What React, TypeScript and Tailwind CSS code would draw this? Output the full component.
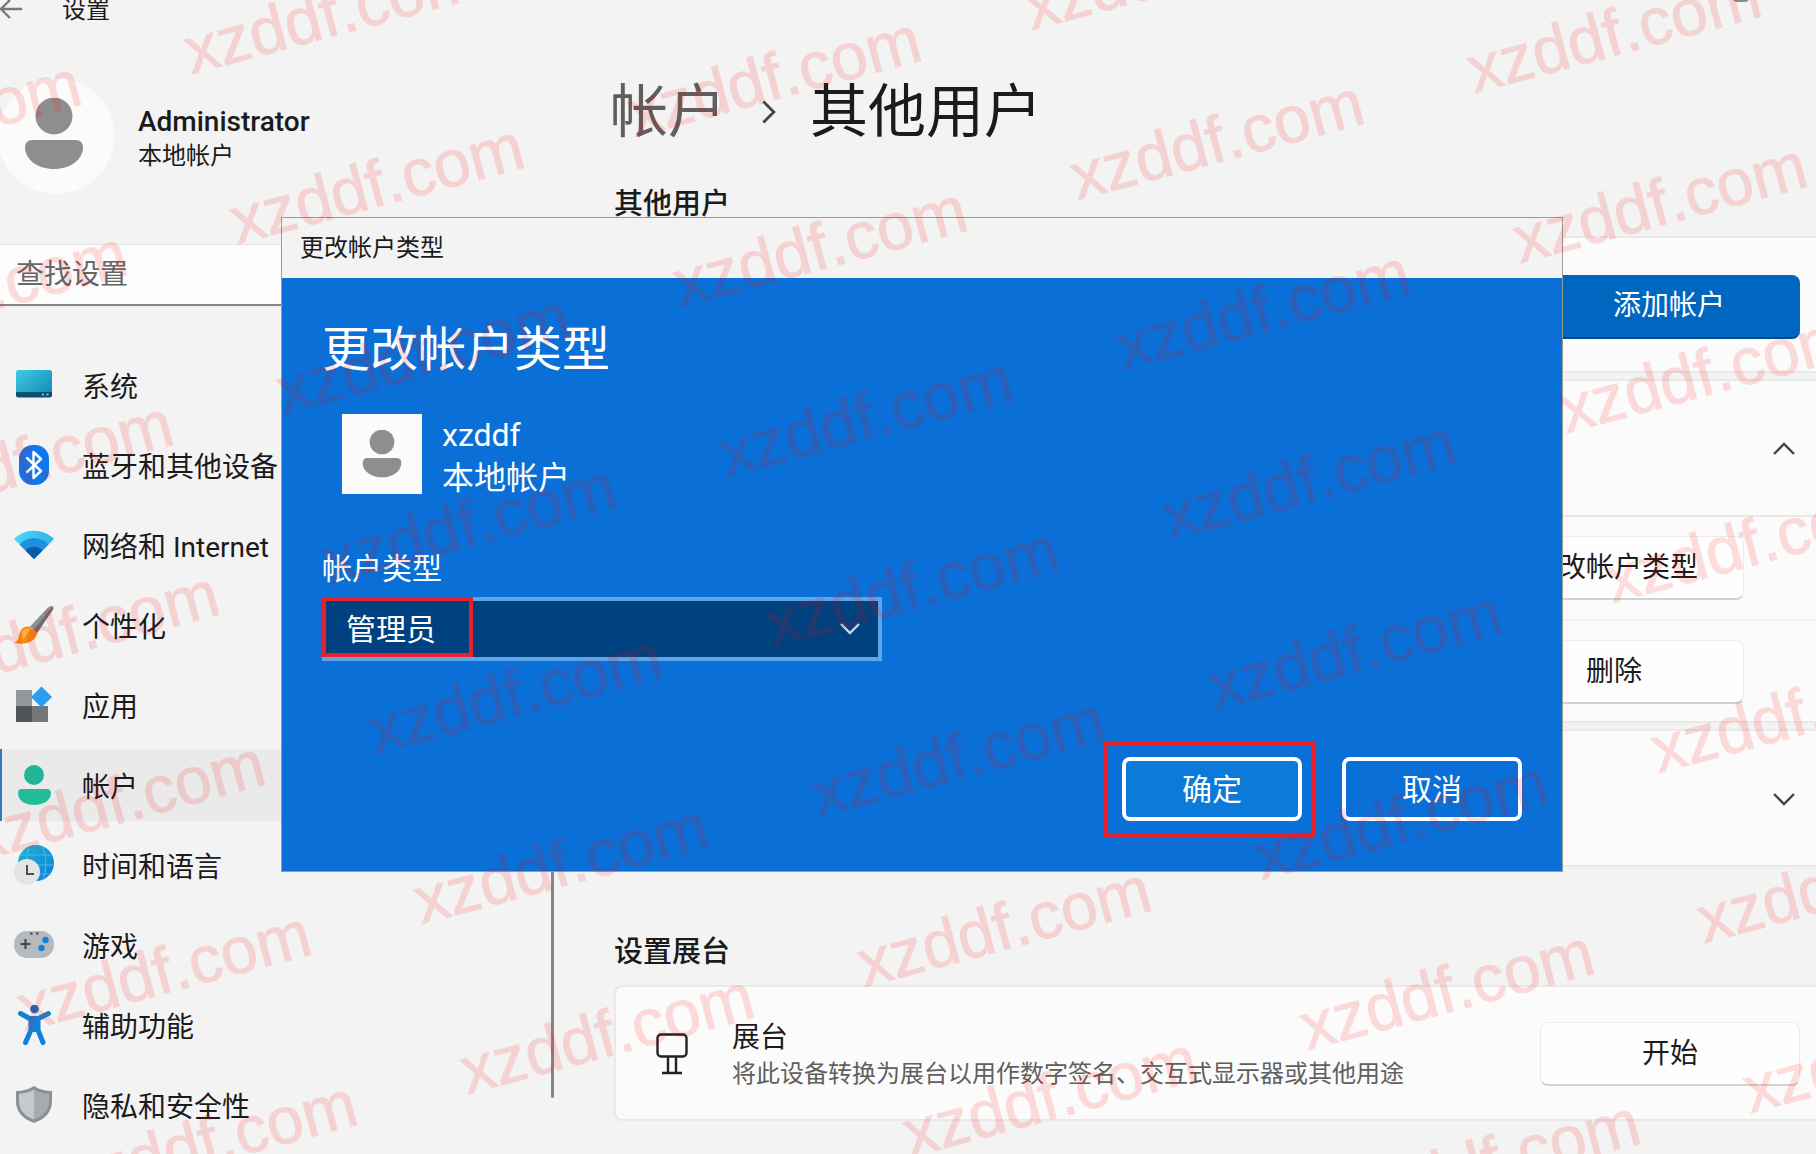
import type { ReactNode } from "react";

function PersonGlyph({ className }: { className: string }) {
  return (
    <svg viewBox="0 0 60 72" className={className} fill="#8e8e8e" aria-hidden="true">
      <circle cx="30" cy="18" r="18.5" />
      <path d="M8 42h44c4 0 7 3 7 7 0 13-13 22-29 22S1 62 1 49c0-4 3-7 7-7z" />
    </svg>
  );
}

function Chevron({ className, d = "M3 7l9 9 9-9" }: { className: string; d?: string }) {
  return (
    <svg viewBox="0 0 24 24" className={className} fill="none" stroke="currentColor" strokeWidth="2.4" aria-hidden="true">
      <path d={d} />
    </svg>
  );
}

function Icon({ children }: { children: ReactNode }) {
  return (
    <svg viewBox="0 0 40 40" className="size-10 shrink-0" aria-hidden="true">
      {children}
    </svg>
  );
}

const navItems = [
  {
    label: "系统",
    icon: (
      <Icon>
        <defs>
          <linearGradient id="sys" x1="0" y1="0" x2="1" y2="1">
            <stop offset="0" stopColor="#3ccfe0" />
            <stop offset="1" stopColor="#1583b4" />
          </linearGradient>
        </defs>
        <rect x="2" y="5" width="36" height="27" rx="2.5" fill="url(#sys)" />
        <path d="M2 27h36v3a2.5 2.5 0 0 1-2.5 2.5h-31A2.5 2.5 0 0 1 2 30z" fill="#0c4f75" />
        <path d="M28 29.5h2M32.5 29.5h2" stroke="#8fdcf2" strokeWidth="1.6" />
      </Icon>
    ),
  },
  {
    label: "蓝牙和其他设备",
    icon: (
      <Icon>
        <rect x="5" y="0" width="30" height="40" rx="14" fill="#0f78ee" />
        <path d="M13 13l14 13-7.5 7V7l7.5 7-14 13" fill="none" stroke="#fff" strokeWidth="2.4" strokeLinejoin="round" strokeLinecap="round" />
      </Icon>
    ),
  },
  {
    label: "网络和 Internet",
    icon: (
      <Icon>
        <defs>
          <linearGradient id="wifi" x1="0" y1="0" x2="1" y2="0">
            <stop offset="0" stopColor="#4bd6f5" />
            <stop offset="1" stopColor="#2fb4ee" />
          </linearGradient>
        </defs>
        <path d="M0 14C11 3 29 3 40 14L20 34z" fill="url(#wifi)" />
        <path d="M5.5 19.5C13 11 27 11 34.5 19.5L20 34z" fill="#1e90dc" />
        <path d="M11.5 25.5c4.5-5 12.5-5 17 0L20 34z" fill="#0c5ba8" />
      </Icon>
    ),
  },
  {
    label: "个性化",
    icon: (
      <Icon>
        <path d="M37 1c2 0 3 1 2 3.5L23 28l-7-6.5L34 2.5C35 1.5 36 1 37 1z" fill="#8d9094" />
        <path d="M38.5 1.5c1 .6 1 1.5.5 3L23 28l-3.5-3z" fill="#6c6f74" />
        <path d="M15.5 21.5l8 7C21 37 10 41 0 37.5c4-1 4.5-4 5.5-9 1.2-5 5.5-7.5 10-7z" fill="#f58a12" />
        <path d="M8 27c2-3.5 5-4 8-3l-7 11z" fill="#fbb040" />
      </Icon>
    ),
  },
  {
    label: "应用",
    icon: (
      <Icon>
        <path d="M2 5h16v16H2z" fill="#94979c" />
        <path d="M2 21h16v16H2z" fill="#505358" />
        <path d="M18 21h16v16H18z" fill="#74777c" />
        <path d="M27.5 1.5L38 12 27.5 22.5 17 12z" fill="#2b9df0" />
      </Icon>
    ),
  },
  {
    label: "帐户",
    icon: (
      <Icon>
        <circle cx="20" cy="10" r="10" fill="#22b597" />
        <path d="M7 24h26c2.5 0 4 1.5 4 4 0 7-7 12-17 12S4 35 4 28c0-2.5 1.5-4 3-4z" fill="#22bd98" />
      </Icon>
    ),
  },
  {
    label: "时间和语言",
    icon: (
      <Icon>
        <defs>
          <linearGradient id="globe" x1="0" y1="0" x2="1" y2="1">
            <stop offset="0" stopColor="#22b3d0" />
            <stop offset="1" stopColor="#0f7ed8" />
          </linearGradient>
        </defs>
        <circle cx="22" cy="18" r="18" fill="url(#globe)" />
        <path d="M7 10h30M4 20h35M8 29h29M15 2c-4 12-4 22 0 33M29 2c4 12 4 22 0 33" stroke="#3fb9e6" strokeWidth="1.2" fill="none" />
        <circle cx="13" cy="27" r="13" fill="#e3e4e6" />
        <path d="M13 20v9h7" fill="none" stroke="#4d4f52" strokeWidth="2" />
      </Icon>
    ),
  },
  {
    label: "游戏",
    icon: (
      <Icon>
        <rect x="0" y="6" width="40" height="27" rx="13" fill="#b6babf" />
        <path d="M6.5 19h10M11.5 14v10" stroke="#45484c" strokeWidth="2.2" />
        <path d="M16 8.5h2.5M22 8.5h2.5" stroke="#45484c" strokeWidth="2" />
        <circle cx="31.5" cy="15" r="3.2" fill="#1480d8" />
        <circle cx="27.5" cy="23" r="3.2" fill="#1480d8" />
      </Icon>
    ),
  },
  {
    label: "辅助功能",
    icon: (
      <Icon>
        <circle cx="20.5" cy="4" r="4.3" fill="#1569ba" />
        <path d="M6.5 8.5l9 5h9l10-5M17 14v11l-5.5 12.5M24 14v11l5 12.5" fill="none" stroke="#1480d8" strokeWidth="5" strokeLinecap="round" strokeLinejoin="round" />
        <path d="M15 13h11v14H15z" fill="#1480d8" />
      </Icon>
    ),
  },
  {
    label: "隐私和安全性",
    icon: (
      <Icon>
        <path d="M20 1c5 3.5 11 5 18 5v10c0 11-7 18-18 22C9 34 2 27 2 16V6c7 0 13-1.5 18-5z" fill="#8c9094" />
        <path d="M20 4.5c4.5 2.5 9.5 4 15 4.2V16c0 9-5.5 15-15 18.5z" fill="#a7abb0" />
        <path d="M20 4.5c-4.5 2.5-9.5 4-15 4.2V16c0 9 5.5 15 15 18.5z" fill="#c6cacd" />
      </Icon>
    ),
  },
];

function Sidebar() {
  return (
    <aside className="flex w-[554px] shrink-0 flex-col">
      <header className="flex h-5 items-center gap-10">
        <button type="button" aria-label="返回">
          <svg viewBox="0 0 22 24" className="h-6 w-[22px]" fill="none" stroke="#777" strokeWidth="2.4" aria-hidden="true">
            <path d="M22 11H1M10 2L1 11l9 9" />
          </svg>
        </button>
        <h1 className="text-2xl">设置</h1>
      </header>

      <div className="mt-[58px] -ml-0.5 flex items-center gap-6">
        <div className="flex size-[116px] items-center justify-center rounded-full bg-[#fbfbfb] pr-1 pb-1">
          <PersonGlyph className="h-[72px] w-[60px]" />
        </div>
        <div className="pt-1">
          <p className="text-[28px] leading-9 font-medium">Administrator</p>
          <p className="text-2xl leading-8">本地帐户</p>
        </div>
      </div>

      <input
        type="search"
        aria-label="查找设置"
        placeholder="查找设置"
        className="mt-[50px] mr-8 h-[62px] rounded-r-md border-t border-b-2 border-t-[#e6e6e6] border-b-[#868686] bg-[#fcfcfc] px-4 text-[28px] placeholder:text-[#666]"
      />

      <div className="mt-[43px] flex items-start">
        <nav className="flex flex-1 flex-col gap-2 pr-8">
          {navItems.map((item) => {
            const active = item.label === "帐户";
            return (
              <a
                key={item.label}
                href="#"
                aria-current={active ? "page" : undefined}
                className={
                  active
                    ? "flex h-[72px] items-center gap-7 rounded-r-lg border-l-2 border-[#3a78b8] bg-[#eaeaea] pl-3 text-[28px]"
                    : "flex h-[72px] items-center gap-7 pl-3.5 text-[28px]"
                }
              >
                {item.icon}
                <span className="pt-1.5">{item.label}</span>
              </a>
            );
          })}
        </nav>
        <div className="h-[749px] w-[3px] rounded-full bg-[#868686]" />
      </div>
    </aside>
  );
}

const card = "rounded-l-lg border-y-2 border-l-2 border-[#e9e9e9] bg-[#fbfbfb]";
const plainButton =
  "h-16 w-[260px] rounded-lg border border-b-2 border-[#ececec] border-b-[#d2d2d2] bg-[#fefefe] text-[28px]";

function OtherUsers() {
  return (
    <main className="flex min-w-0 flex-1 flex-col pl-[60px]">
      <div className="-ml-1 mt-[72px] flex h-20 items-center text-[58px]">
        <a href="#" className="text-[#5f5f5f]">
          帐户
        </a>
        <Chevron className="mr-7 ml-7 size-7 text-[#444]" d="M8 3l9 9-9 9" />
        <h2>其他用户</h2>
      </div>

      <h3 className="mt-8 h-[52px] text-[29px] leading-10 font-medium">其他用户</h3>

      <section className={`${card} flex h-[137px] items-center justify-end pt-1 pr-4`}>
        <button type="button" className="h-16 w-[262px] rounded-lg border-b-2 border-[#004a8a] bg-[#0067c0] text-[28px] text-white">
          添加帐户
        </button>
      </section>

      <section className={`${card} mt-1.5`}>
        <div className="flex h-[136px] items-center justify-end border-b-2 border-[#e9e9e9] pt-0.5 pr-5">
          <button type="button" aria-label="收起">
            <Chevron className="size-6 text-[#444]" d="M2 17l10-10 10 10" />
          </button>
        </div>
        <div className="flex h-[104px] items-center justify-end border-b-2 border-[#f1f1f1] pr-[72px]">
          <button type="button" className={plainButton}>
            更改帐户类型
          </button>
        </div>
        <div className="flex h-[100px] items-center justify-end pt-0.5 pr-[72px]">
          <button type="button" className={plainButton}>
            删除
          </button>
        </div>
      </section>

      <section className={`${card} mt-1.5 flex h-[138px] items-center justify-end pt-0.5 pr-5`}>
        <button type="button" aria-label="展开">
          <Chevron className="size-6 text-[#444]" d="M2 7l10 10 10-10" />
        </button>
      </section>

      <h3 className="mt-[65px] text-[29px] leading-10 font-medium">设置展台</h3>

      <section className={`${card} mt-[13px] flex h-[136px] items-center pt-0.5 pr-4 pl-10`}>
        <svg viewBox="0 0 32 42" className="h-[42px] w-8" fill="none" stroke="#222" strokeWidth="2.4" aria-hidden="true">
          <rect x="1.5" y="1.5" width="29" height="22" rx="3.5" />
          <path d="M12 23.5V40M20 23.5V40M6 40h20" />
        </svg>
        <div className="ml-11 flex-1 pt-1">
          <h4 className="text-[28px] leading-9">展台</h4>
          <p className="text-2xl leading-9 text-[#5f5f5f]">将此设备转换为展台以用作数字签名、交互式显示器或其他用途</p>
        </div>
        <button type="button" className={plainButton}>
          开始
        </button>
      </section>
    </main>
  );
}

function AccountTypeDialog() {
  return (
    <div
      role="dialog"
      aria-labelledby="dialog-title"
      className="absolute top-[217px] right-[253px] left-[281px] border border-[#9a9a9a] bg-[#0a6fd6] text-white"
    >
      <div className="flex h-[60px] items-center bg-[#f3f3f3] pl-[18px] text-2xl text-[#1b1b1b]">更改帐户类型</div>

      <form className="px-10 pt-[42px] pb-[50px]">
        <h2 id="dialog-title" className="text-5xl leading-[60px]">
          更改帐户类型
        </h2>

        <div className="mt-[34px] flex gap-5 pl-5">
          <div className="flex size-20 items-center justify-center bg-[#fbfbfb]">
            <PersonGlyph className="h-12 w-10" />
          </div>
          <div className="text-[32px] leading-[43px]">
            <p>xzddf</p>
            <p>本地帐户</p>
          </div>
        </div>

        <label htmlFor="account-type" className="mt-[49px] block text-[30px] leading-10">
          帐户类型
        </label>
        <div className="relative mt-2 w-[560px]">
          <select
            id="account-type"
            className="block h-16 w-full appearance-none border-4 border-[#5fa3e8] bg-[#00427f] px-5 text-[30px]"
          >
            <option>管理员</option>
            <option>标准用户</option>
          </select>
          <Chevron className="pointer-events-none absolute top-5 right-5 size-6 text-[#c5d5e6]" />
          <div className="pointer-events-none absolute top-0 left-0 h-[60px] w-[151px] border-4 border-[#e8202a]" />
        </div>

        <div className="mt-24 flex justify-end gap-10">
          <div className="relative">
            <button type="button" className="h-16 w-[180px] rounded-lg border-4 border-white bg-[#0c7ad8] text-[30px]">
              确定
            </button>
            <div className="pointer-events-none absolute -inset-y-4 -right-3.5 -left-4.5 border-4 border-[#e8202a]" />
          </div>
          <button type="button" className="h-16 w-[180px] rounded-lg border-4 border-white text-[30px]">
            取消
          </button>
        </div>
      </form>
    </div>
  );
}

// skewed grid, each column starts a little lower than the one before
const marks = [-2, -1, 0, 1, 2, 3].flatMap((col) =>
  [-3, -2, -1, 0, 1, 2, 3, 4, 5, 6, 7].map((row) => ({
    left: 240 + col * 443 + row * 46,
    top: 188 + col * 63 + row * 170,
  }))
);

function Watermark() {
  return (
    <div className="pointer-events-none absolute inset-0 overflow-hidden" aria-hidden="true">
      {marks.map((pos) => (
        <span
          key={`${pos.left}-${pos.top}`}
          style={pos}
          className="absolute origin-bottom-left -rotate-15 font-['Liberation_Sans',Arial,sans-serif] text-[66px] leading-[66px] text-[#ff0000] opacity-13 [-webkit-text-stroke:1px_#ff0000]"
        >
          xzddf.com
        </span>
      ))}
    </div>
  );
}

export default function App() {
  return (
    <div className="relative flex min-h-screen overflow-hidden bg-[#f3f3f3] font-[Roboto,'Noto_Sans_CJK_SC',sans-serif] text-[#1b1b1b]">
      <Sidebar />
      <OtherUsers />
      <button
        type="button"
        aria-label="最大化"
        className="absolute -top-3.5 right-[67px] size-4 rounded-sm border-2 border-[#8a8a8a]"
      />
      <AccountTypeDialog />
      <Watermark />
    </div>
  );
}
